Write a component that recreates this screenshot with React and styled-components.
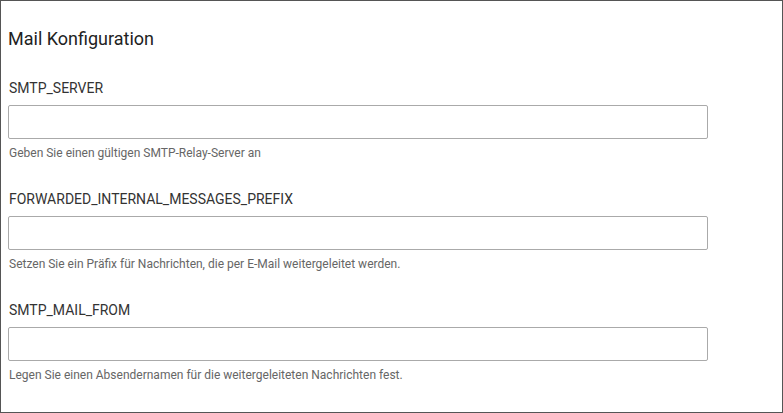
import React from "react";
import styled, { createGlobalStyle } from "styled-components";

// Styles
const GlobalStyle = createGlobalStyle`
  html, body {
    margin: 0;
    padding: 0;
    background: #fff;
  }
  body {
    font-family: Roboto, "Liberation Sans", Arial, sans-serif;
  }
`;

const Frame = styled.div`
  box-sizing: border-box;
  height: 413px;
  border: 1px solid #555;
  padding: 27px 7px 0 7px;
  background: #fff;
`;

const Title = styled.h3`
  margin: 0 0 31px 0;
  font-size: 18px;
  line-height: 21px;
  font-weight: 400;
  color: #222;
`;

const Field = styled.div`
  display: flex;
  flex-direction: column;
  align-items: flex-start;
  margin-bottom: 31px;
`;

const Label = styled.label`
  display: block;
  margin: 0 0 9px 1px;
  font-size: 14px;
  line-height: 16px;
  color: #333;
`;

const Input = styled.input`
  box-sizing: border-box;
  width: 700px;
  height: 34px;
  margin: 0;
  padding: 0 8px;
  border: 1px solid #aaa;
  border-radius: 2px;
  background: #fff;
  font-family: inherit;
  font-size: 14px;
  outline: none;
`;

const Help = styled.span`
  margin: 7px 0 0 1px;
  font-size: 12px;
  line-height: 14px;
  color: #666;
`;

const fields = [
  {
    name: "SMTP_SERVER",
    help: "Geben Sie einen gültigen SMTP-Relay-Server an",
  },
  {
    name: "FORWARDED_INTERNAL_MESSAGES_PREFIX",
    help: "Setzen Sie ein Präfix für Nachrichten, die per E-Mail weitergeleitet werden.",
  },
  {
    name: "SMTP_MAIL_FROM",
    help: "Legen Sie einen Absendernamen für die weitergeleiteten Nachrichten fest.",
  },
];

const App = () => (
  <>
    <GlobalStyle />
    <Frame>
      <Title>Mail Konfiguration</Title>
      {fields.map((f) => (
        <Field key={f.name}>
          <Label htmlFor={f.name}>{f.name}</Label>
          <Input id={f.name} type="text" />
          <Help>{f.help}</Help>
        </Field>
      ))}
    </Frame>
  </>
);

export default App;
